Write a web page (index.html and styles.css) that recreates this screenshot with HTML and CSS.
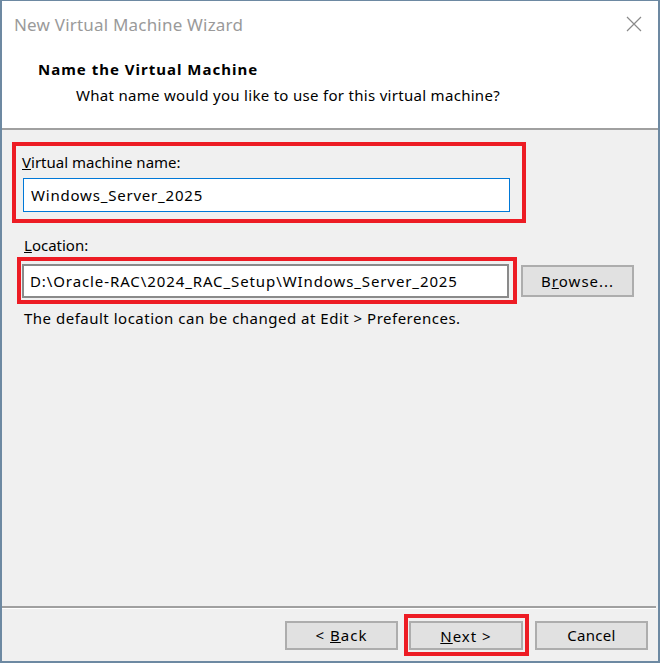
FILE: index.html
```html
<!DOCTYPE html>
<html>
<head>
<meta charset="utf-8">
<link rel="stylesheet" href="styles.css">
</head>
<body>
<div class="window">
  <div class="header">
    <div class="titlebar">
      <span class="title">New Virtual Machine Wizard</span>
      <svg class="close" width="16" height="16" viewBox="0 0 16 16"><path d="M1 1L15 15M15 1L1 15" stroke="#8a8a8a" stroke-width="1.2" fill="none"/></svg>
    </div>
    <div class="heading">Name the Virtual Machine</div>
    <div class="subheading">What name would you like to use for this virtual machine?</div>
  </div>
  <div class="sep"></div>
  <div class="content">
    <div class="mark mark-name">
      <div class="label"><u>V</u>irtual machine name:</div>
      <div class="textbox focused">Windows_Server_2025</div>
    </div>
    <div class="label loc-label"><u>L</u>ocation:</div>
    <div class="loc-row">
      <div class="mark mark-loc">
        <div class="textbox plain">D:\Oracle-RAC\2024_RAC_Setup\WIndows_Server_2025</div>
      </div>
      <div class="btn browse">B<u>r</u>owse...</div>
    </div>
    <div class="hint">The default location can be changed at Edit &gt; Preferences.</div>
  </div>
  <div class="sep2"></div>
  <div class="footer">
    <div class="btn">&lt;&nbsp;<u>B</u>ack</div>
    <div class="mark mark-next"><div class="btn"><u>N</u>ext &gt;</div></div>
    <div class="btn cancel">Cancel</div>
  </div>
</div>
</body>
</html>
```
FILE: styles.css
```css
* { box-sizing: border-box; }
html, body { margin: 0; padding: 0; }
body {
  font-family: "Noto Sans", "Open Sans", sans-serif;
  font-size: 15px;
  color: #000;
}
.window {
  width: 660px;
  height: 663px;
  border: 2px solid #6d89a2;
  border-top-width: 1px;
  background: #f0f0f0;
  display: flex;
  flex-direction: column;
}
.header {
  background: #fff;
  height: 127px;
}
.titlebar {
  height: 46px;
  display: flex;
  align-items: center;
  justify-content: space-between;
  padding: 0 16px 0 12px;
}
.title {
  font-size: 17px;
  letter-spacing: 0.2px;
  color: #9a9a9a;
}
.close { display: block; }
.heading {
  font-weight: bold;
  letter-spacing: 1px;
  padding-left: 36px;
  margin-top: 12px;
  line-height: 20px;
}
.subheading {
  letter-spacing: 0.3px;
  padding-left: 74px;
  margin-top: 6px;
  line-height: 20px;
}
.sep {
  height: 2px;
  background: #a0a0a0;
}
.content {
  flex: 1;
  padding: 12px 0 0 10px;
}
.mark {
  border: 4px solid #ed1c24;
}
.mark-name {
  width: 514px;
  padding: 6px 12px 7px 6px;
}
.label {
  line-height: 20px;
  height: 26px;
}
.textbox {
  background: #fff;
  height: 34px;
  line-height: 32px;
  padding-left: 7px;
}
.focused {
  border: 1px solid #0078d7;
  margin-left: 1px;
  padding-left: 7px;
  letter-spacing: 0.8px;
}
.plain {
  border: 2px solid #8a8a8a;
  width: 487px;
  padding-left: 6px;
  line-height: 30px;
  letter-spacing: 0.9px;
}
.loc-label {
  margin: 12px 0 0 12px;
  height: 22px;
}
.loc-row {
  display: flex;
  align-items: center;
  gap: 4px;
  margin-left: 5px;
}
.mark-loc {
  padding: 3px 4px 2px 1px;
}
.btn {
  width: 113px;
  height: 29px;
  border: 2px solid #adadad;
  background: #e1e1e1;
  display: flex;
  align-items: center;
  justify-content: center;
  letter-spacing: 1px;
}
.browse {
  height: 32px;
}
.cancel { letter-spacing: 0.3px; }
.hint {
  margin: 4px 0 0 12px;
  line-height: 20px;
  letter-spacing: 0.5px;
}
.sep2 {
  height: 3px;
  border-top: 2px solid #a0a0a0;
  border-bottom: 1px solid #fff;
  margin-right: 2px;
}
.footer {
  height: 52px;
  display: flex;
  align-items: center;
  justify-content: flex-end;
  gap: 6px;
  padding-right: 10px;
}
.mark-next {
  padding: 3px 2px 2px 1px;
}
.mark-next .btn { width: 114px; }
```
